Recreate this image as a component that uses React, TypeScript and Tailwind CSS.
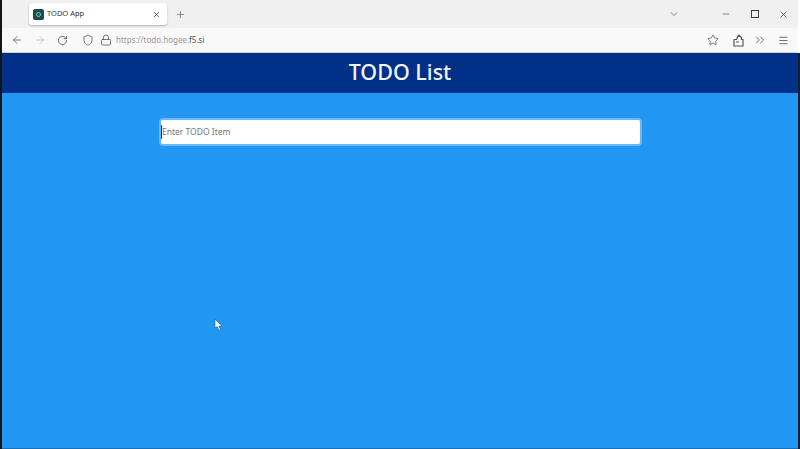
import { ArrowLeft, ArrowRight, ChevronDown, ChevronsRight, Menu, Minus, Plus, RotateCw, Shield, Lock, Star, X } from 'lucide-react'

function Cursor() {
  return (
    <svg className="absolute left-[214px] top-[318px]" width="9" height="14" viewBox="0 0 9 14">
      <path d="M1 1 L1 10 L3 8.5 L5 12.5 L6.5 11.5 L5 8 L8 8 Z" fill="#ffffff" stroke="#1b5f9c" strokeWidth="0.6" />
    </svg>
  )
}

// firefox extensions icon, a box with a peaked tab on top
function ExtensionIcon() {
  return (
    <svg className="ml-[14px] h-[13px] w-[11px]" viewBox="0 0 11 13" fill="none" stroke="currentColor" strokeWidth="1.2">
      <path d="M1 5.5 L3.5 5.5 L5.5 1 L8.5 3.5 L8.5 5.5 L10 5.5 L10 12 L1 12 Z M3 8 L6 8" strokeLinejoin="round" />
    </svg>
  )
}

export default function App() {
  return (
    <div className="relative flex h-[449px] w-[800px] overflow-hidden bg-white font-['Noto_Sans',sans-serif]">
      <div className="w-[2px] shrink-0 bg-[#101418]" />
      <div className="flex min-w-0 flex-1 flex-col">
        {/* tab strip */}
        <div className="flex h-[28px] shrink-0 items-center bg-[#f0f0f0] pl-[27px] text-[#3a3a3a]">
          <div className="flex h-[22px] w-[138px] items-center rounded-[3px] bg-white pl-[4px] pr-[6px] shadow-[0_1px_2px_rgba(0,0,0,0.25)]">
            <div className="flex h-[11px] w-[11px] items-center justify-center rounded-[2px] bg-[#1e4a4a]">
              <div className="h-[5px] w-[5px] rounded-full border border-[#7fd4c8]" />
            </div>
            <span className="ml-[3px] text-[7.5px] text-[#333]">TODO App</span>
            <X className="ml-auto h-[9px] w-[9px]" strokeWidth={2} />
          </div>
          <Plus className="ml-[8px] h-[11px] w-[11px] text-[#666]" strokeWidth={1.5} />
          <ChevronDown className="ml-[482px] h-[12px] w-[12px] text-[#666]" strokeWidth={1.5} />
          <Minus className="ml-[41px] h-[10px] w-[10px]" strokeWidth={1.5} />
          <div className="ml-[20px] h-[8px] w-[8px] border-[1.5px] border-[#3a3a3a]" />
          <X className="ml-[19px] h-[11px] w-[11px]" strokeWidth={1.5} />
        </div>
        {/* toolbar */}
        <div className="flex h-[25px] shrink-0 items-center border-b border-[#cfd3da] bg-[#f9f9f9] pl-[9px] text-[#555]">
          <ArrowLeft className="h-[12px] w-[12px]" strokeWidth={1.6} />
          <ArrowRight className="ml-[11px] h-[12px] w-[12px] text-[#bbb]" strokeWidth={1.6} />
          <RotateCw className="ml-[11px] h-[11px] w-[11px]" strokeWidth={1.8} />
          <Shield className="ml-[14px] h-[12px] w-[12px]" strokeWidth={1.6} />
          <Lock className="ml-[6px] h-[12px] w-[12px]" strokeWidth={1.6} />
          <span className="ml-[4px] text-[8px] text-[#9a9a9a]">
            https://todo.hogee.<span className="text-[#555]">f5.si</span>
          </span>
          <Star className="ml-[503px] h-[12px] w-[12px]" strokeWidth={1.6} />
          <ExtensionIcon />
          <ChevronsRight className="ml-[9px] h-[14px] w-[14px]" strokeWidth={1.5} />
          <Menu className="ml-[11px] h-[11px] w-[11px]" strokeWidth={1.8} />
        </div>
        {/* page */}
        <div className="flex h-[40px] shrink-0 items-center justify-center bg-[#003087] pb-[2px]">
          <h1 className="text-[21.5px] leading-none font-medium text-[#f2f6fb]">TODO List</h1>
        </div>
        <div className="flex flex-1 justify-center border-b border-[#1a6fb5] bg-[#2196f3] pt-[25px] pl-[1px]">
          <div className="flex h-[28px] w-[483px] items-center rounded-[4px] border-2 border-[#6db5f5] bg-white">
            <div className="h-[14px] w-px bg-[#333]" />
            <span className="text-[8.5px] text-[#777]">Enter TODO Item</span>
          </div>
        </div>
      </div>
      <div className="flex w-[2px] shrink-0 flex-col bg-[#0b1f33]">
        <div className="h-[53px] bg-white" />
      </div>
      <Cursor />
    </div>
  )
}
